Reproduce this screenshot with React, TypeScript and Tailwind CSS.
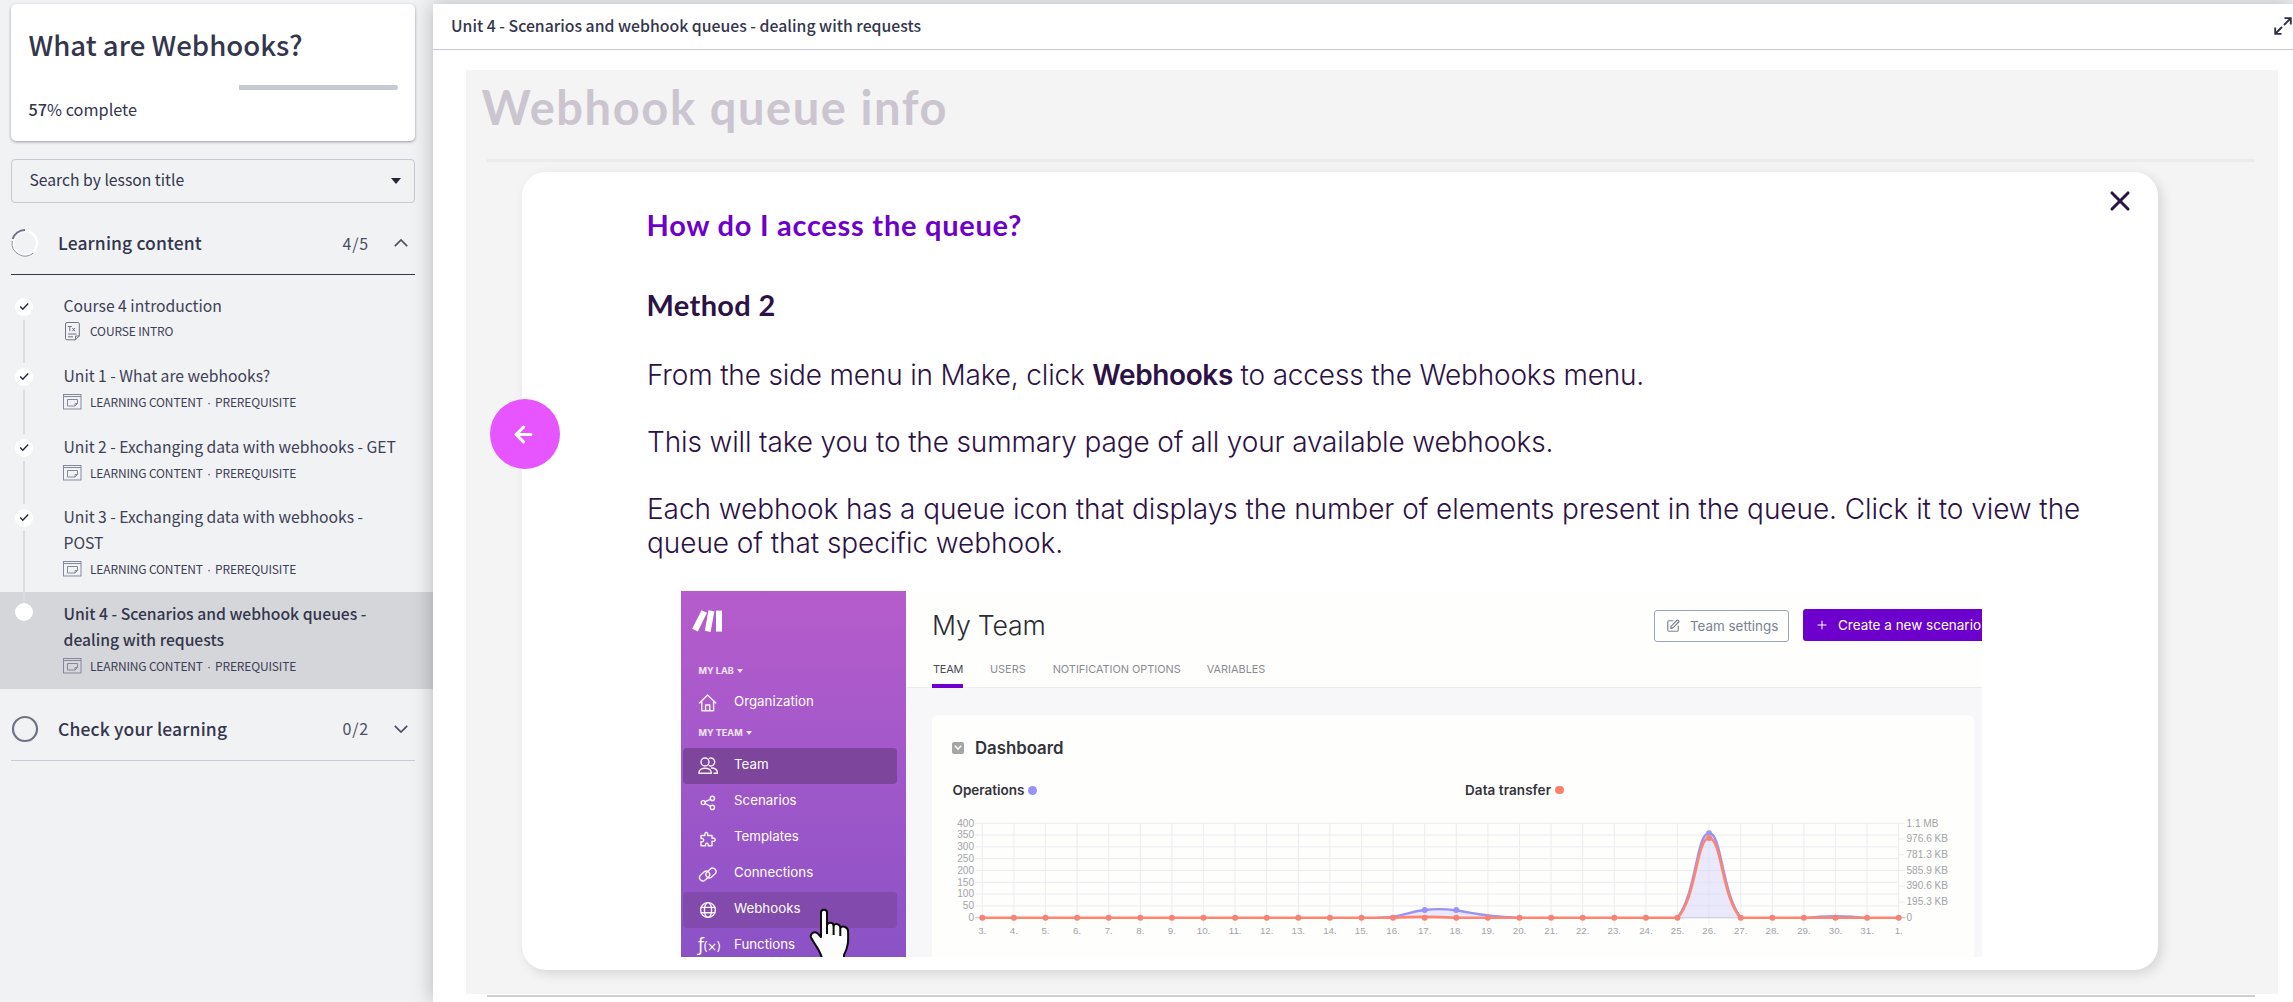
import type { ReactNode } from "react";
import { SquarePen, Plus, X, ArrowLeft } from "lucide-react";

const days = ["3.", "4.", "5.", "6.", "7.", "8.", "9.", "10.", "11.", "12.", "13.", "14.", "15.", "16.", "17.", "18.", "19.", "20.", "21.", "22.", "23.", "24.", "25.", "26.", "27.", "28.", "29.", "30.", "31.", "1."];
const opsTicks = ["400", "350", "300", "250", "200", "150", "100", "50", "0"];
const dataTicks = ["1.1 MB", "976.6 KB", "781.3 KB", "585.9 KB", "390.6 KB", "195.3 KB", "0"];

function CheckMark() {
  return (
    <svg viewBox="0 0 18 18" className="size-[18px]">
      <circle cx="9" cy="9" r="9" fill="#fff" />
      <path d="M5.2 8.6 L7.8 11.2 L13.2 5.6" fill="none" stroke="#23263b" strokeWidth="1.4" />
    </svg>
  );
}

function LessonIcon() {
  return (
    <svg viewBox="0 0 19 16" className="h-4 w-[19px]" fill="none" stroke="#85889a" strokeWidth="1">
      <rect x="0.5" y="0.5" width="17.5" height="14.5" />
      <path d="M0.5 2.5 H18" />
      <path d="M4.5 5.5 H14.5 V9.5 L12 12 H4.5 Z M14.5 9.5 H12 V12" />
    </svg>
  );
}

function IntroIcon() {
  return (
    <svg viewBox="0 0 15 19" className="ml-0.5 h-[19px] w-[15px]" fill="none" stroke="#6f7285" strokeWidth="1">
      <path d="M0.5 2 Q0.5 0.5 2 0.5 H12.8 Q14.3 0.5 14.3 2 V14 L10.5 17.8 H2 Q0.5 17.8 0.5 16.3 Z M14.3 14 H10.5 V17.8" />
      <path d="M2.8 4.5 H6.8 M4.8 4.5 V9.2 M7.4 6 L10 9.2 M10 6 L7.4 9.2 M3 12 H11.5 M3 14.8 H8" />
    </svg>
  );
}

function Lesson({ title, intro, current, h }: { title: ReactNode; intro?: boolean; current?: boolean; h: string }) {
  return (
    <div className={`relative flex ${h} ${current ? "bg-[#d5d6da]" : ""}`}>
      <div className="flex w-[63.5px] shrink-0 flex-col items-center pr-4 pt-[14px]">
        {current ? <span className="-mt-[3px] size-[18px] rounded-full bg-white" /> : <CheckMark />}
      </div>
      {!current && <span className="absolute left-[23px] top-[36px] -bottom-[9px] z-10 w-[2px] bg-[#dadce1]" />}
      <div className="pt-[9px] text-[#3d4057]">
        <div className={`text-[15.7px] leading-[26px] ${current ? "font-medium text-[#33364d]" : ""}`}>{title}</div>
        <div className="flex h-6 items-center">
          <span className={`-ml-px flex w-[27.5px] ${intro ? "" : "pt-px"}`}>{intro ? <IntroIcon /> : <LessonIcon />}</span>
          <span className={`text-[12px] leading-6 tracking-[-0.15px] ${intro ? "" : "pt-[2px]"}`}>
            {intro ? "COURSE INTRO" : <>LEARNING CONTENT <span className="mx-[1.6px] font-['Liberation_Sans',sans-serif]">·</span> PREREQUISITE</>}
          </span>
        </div>
      </div>
    </div>
  );
}

function Chevron({ up }: { up?: boolean }) {
  return (
    <svg viewBox="0 0 14 8" className="ml-[25px] mr-[7px] h-2 w-[14px]" fill="none" stroke="#4b4e63" strokeWidth="1.7">
      <path d={up ? "M0.8 7.2 L7 1 L13.2 7.2" : "M0.8 0.8 L7 7 L13.2 0.8"} />
    </svg>
  );
}

function Sidebar() {
  return (
    <aside className="w-[433px] shrink-0 overflow-hidden bg-[#f1f2f4] pt-1 font-['Noto_Sans_CJK_SC',sans-serif] text-[#33364d]">
      <div className="ml-[11px] h-[137px] w-[404px] rounded-[5px] bg-white pl-[17.5px] pr-[17px] pt-[18px] shadow-[0_1px_3px_rgba(60,64,80,0.5)]">
        <h1 className="text-[27.6px] font-medium leading-[44px]">What are Webhooks?</h1>
        <div className="mt-[19px] flex h-[5px] justify-end">
          <div className="h-[5px] w-[159px] rounded-r-full bg-[#c7cad4]" />
        </div>
        <p className="mt-[6px] text-[16.3px] leading-[26px]"><b className="font-medium">57</b>% complete</p>
      </div>
      <div className="ml-[11px] mt-[18px] flex h-[44px] w-[404px] items-center justify-between rounded-[4px] border border-[#c7cad4] pl-[17.5px] pr-[13px]">
        <span className="-mt-0.5 text-[15.7px] leading-6">Search by lesson title</span>
        <span className="h-0 w-0 border-x-[5px] border-t-[6px] border-x-transparent border-t-[#23263b]" />
      </div>
      <div className="ml-[11px] flex h-[72px] w-[404px] items-center border-b border-[#33364d] pt-[9px]">
        <svg viewBox="0 0 28 28" className="size-[28px]" fill="none">
          <circle cx="14" cy="14" r="12" stroke="#fff" strokeWidth="2.4" />
          <path d="M14 1 A13 13 0 0 0 1.6 10" stroke="#6f7285" strokeWidth="2" />
          <path d="M1.2 12 A13 13 0 0 0 22 24.3" stroke="#8d90a0" strokeWidth="1" />
        </svg>
        <h2 className="ml-[19px] flex-1 text-[17.5px] font-medium leading-7 tracking-[0.12px]">Learning content</h2>
        <span className="text-[16px] leading-6 tracking-[0.8px] text-[#4b4e63]">4/5</span>
        <Chevron up />
      </div>
      <div className="mt-[9px]">
        <Lesson h="h-[70px]" title="Course 4 introduction" intro />
        <Lesson h="h-[71px]" title="Unit 1 - What are webhooks?" />
        <Lesson h="h-[70px]" title="Unit 2 - Exchanging data with webhooks - GET" />
        <Lesson h="h-[97px]" title={<>Unit 3 - Exchanging data with webhooks -<br />POST</>} />
        <Lesson current h="h-[97px]" title={<>Unit 4 - Scenarios and webhook queues -<br />dealing with requests</>} />
      </div>
      <div className="ml-[11px] flex h-[72px] w-[404px] items-center border-b border-[#c7cad8] pt-[9px]">
        <svg viewBox="0 0 28 28" className="size-[28px]" fill="none">
          <circle cx="14" cy="14" r="12" stroke="#6f7285" strokeWidth="2.2" />
        </svg>
        <h2 className="ml-[19px] flex-1 text-[17.5px] font-medium leading-7 tracking-[0.15px]">Check your learning</h2>
        <span className="-mt-0.5 text-[16px] leading-6 tracking-[0.8px] text-[#4b4e63]">0/2</span>
        <Chevron />
      </div>
    </aside>
  );
}

function Chart() {
  const x0 = 50.3;
  const dx = 31.6;
  const y0 = 202.7;
  const top = 108.3;
  const px = (i: number) => x0 + i * dx;
  const peak = `M${px(22)} ${y0} C${px(22.6)} 178 ${px(22.6)} 118 ${px(23)} 118 C${px(23.4)} 118 ${px(23.4)} 178 ${px(24)} ${y0}`;
  const bump = `M${px(12.5)} ${y0} C${px(13.3)} 203 ${px(13.4)} 197 ${px(14)} 195 C${px(14.3)} 193.8 ${px(14.7)} 194 ${px(15)} 195.5 C${px(15.5)} 197.5 ${px(15.8)} 201.5 ${px(16.9)} ${y0}`;
  return (
    <svg viewBox="0 0 1042 242" className="absolute inset-0 h-[242px] w-[1042px] font-['Liberation_Sans',sans-serif]">
      <g stroke="#ececf1" strokeWidth="1">
        {opsTicks.map((t, i) => (
          <path key={t} d={`M${x0 - 7} ${top + i * 11.8} H${px(29)}`} />
        ))}
        {days.map((d, i) => (
          <path key={d} d={`M${px(i)} ${top} V${y0 + 7}`} />
        ))}
        {dataTicks.map((t, i) => (
          <path key={t} d={`M${px(29)} ${top + i * 15.73} h6`} />
        ))}
      </g>
      <path d={`M${x0 - 7} ${y0} H${px(29) + 7}`} stroke="#c9c9d0" strokeWidth="1.2" />
      <path d={`${peak} ${bump}`} fill="#dcd8fa" fillOpacity="0.6" />
      <path d={`${peak} ${bump}`} fill="none" stroke="#9a93f3" strokeWidth="2.4" />
      <path d={`M${px(26)} ${y0} Q${px(27)} 199 ${px(28)} ${y0}`} fill="none" stroke="#9a93f3" strokeWidth="1.6" />
      <path
        d={`M${x0} ${y0} H${px(13)} Q${px(14)} 201 ${px(15)} ${y0} H${px(22)} M${px(24)} ${y0} H${px(29)}`}
        fill="none"
        stroke="#ff8571"
        strokeWidth="2.6"
      />
      <path d={`M${px(22)} ${y0} C${px(22.6)} 183 ${px(22.6)} 123 ${px(23)} 123 C${px(23.4)} 123 ${px(23.4)} 183 ${px(24)} ${y0}`} fill="none" stroke="#ff8571" strokeWidth="2.6" />
      {[14, 15].map((i) => (
        <circle key={i} cx={px(i)} cy="195" r="2.9" fill="#9a93f3" />
      ))}
      <circle cx={px(23)} cy="118" r="2.8" fill="#9a93f3" />
      {days.map((d, i) => (
        <circle key={d} cx={px(i)} cy={i === 23 ? 123 : y0} r="3" fill="#f58478" />
      ))}
      <g fill="#a3a3a8" fontSize="10.1">
        {opsTicks.map((t, i) => (
          <text key={t} x="42" y={top + 3.2 + i * 11.8} textAnchor="end">{t}</text>
        ))}
        {days.map((d, i) => (
          <text key={d} x={px(i)} y="219.3" textAnchor="middle" fontSize="9.7">{d}</text>
        ))}
        {dataTicks.map((t, i) => (
          <text key={t} x="974.5" y={top + 3.2 + i * 15.73}>{t}</text>
        ))}
      </g>
    </svg>
  );
}

function MenuIcon({ children }: { children: ReactNode }) {
  return (
    <svg viewBox="0 0 20 20" className="size-5" fill="none" stroke="#fff" strokeOpacity="0.92" strokeWidth="1.4" strokeLinejoin="round" strokeLinecap="round">
      {children}
    </svg>
  );
}

function MenuRow({ icon, label, bg }: { icon: ReactNode; label: string; bg?: string }) {
  return (
    <div className={`ml-[2px] flex h-9 w-[214px] shrink-0 items-center rounded-[4px] pl-[15px] text-white ${bg ?? ""}`}>
      <span className="flex w-[36px] items-center">{icon}</span>
      <span className="-mt-[5px] text-[13.3px] leading-5">{label}</span>
    </div>
  );
}

function MenuHeading({ label }: { label: string }) {
  return (
    <div className="ml-[17.5px] flex h-[14px] shrink-0 items-center text-[9.1px] font-bold text-white/85">
      {label}
      <span className="ml-[3.5px] h-0 w-0 border-x-[3px] border-t-[4px] border-x-transparent border-t-white/85" />
    </div>
  );
}

function MakeMenu() {
  return (
    <div className="flex w-[225px] shrink-0 flex-col bg-linear-to-b from-[#b65ccc] to-[#8b52c6]">
      <svg viewBox="0 0 31 22" className="mb-[32px] ml-[11px] mt-[19px] h-[22px] w-[31px] shrink-0" fill="#fff">
        <path d="M9.5 0.3 L15 2.8 L5.8 21.6 L0.2 18.8 Z" />
        <path d="M16.5 0.3 L22.4 1.2 L18.6 22 L12.8 20.8 Z" />
        <path d="M24 0.6 H30 V21.6 H24 Z" />
      </svg>
      <MenuHeading label="MY LAB" />
      <div className="mb-[5px] mt-[7px]">
        <MenuRow label="Organization" icon={<MenuIcon><path d="M1.5 10 L9.6 2 L17.8 10 M3.8 8 V17.8 H15.6 V8 M7.6 17.8 V12 H11.8 V17.8" /></MenuIcon>} />
      </div>
      <MenuHeading label="MY TEAM" />
      <div className="mt-[8px]">
        <MenuRow label="Team" bg="bg-[#7d459c]" icon={<MenuIcon><circle cx="7" cy="6" r="4" /><path d="M11.2 2.3 A4 4 0 1 1 11.2 9.7 M0.8 17.2 C0.8 10.5 13.4 10.5 13.4 17.2 Z M13.5 12 C17 12 19.4 14 19.4 17.2 H16" /></MenuIcon>} />
        <MenuRow label="Scenarios" icon={<MenuIcon><circle cx="5.2" cy="10.6" r="2" /><circle cx="14.4" cy="6.4" r="2.1" /><circle cx="14.4" cy="15.4" r="2.1" /><path d="M7.2 9.7 L12.4 7.3 M7.2 11.5 L12.4 14.4" /></MenuIcon>} />
        <MenuRow label="Templates" icon={<MenuIcon><path d="M3 7.5 H7 C5.8 3.5 10.8 3.5 9.6 7.5 H14 V10.3 C18.2 8.9 18.2 14.5 14 13.2 V17.8 H10.2 C11 14.2 6.8 14.2 7.6 17.8 H3 V13.6 C6.6 14.6 6.6 9.6 3 10.6 Z" /></MenuIcon>} />
        <MenuRow label="Connections" icon={<MenuIcon><rect x="-5.6" y="-3.4" width="11.2" height="6.8" rx="3.4" transform="translate(6.6 12) rotate(-42)" /><rect x="-5.6" y="-3.4" width="11.2" height="6.8" rx="3.4" transform="translate(13 9) rotate(-42)" /></MenuIcon>} />
        <MenuRow label="Webhooks" bg="bg-[#814aac]" icon={<MenuIcon><circle cx="10" cy="10" r="7.4" /><ellipse cx="10" cy="10" rx="3.6" ry="7.4" /><path d="M3.2 7.4 H16.8 M3.2 12.8 H16.8" /></MenuIcon>} />
        <MenuRow label="Functions" icon={<span className="whitespace-nowrap font-['DejaVu_Sans',sans-serif] text-[12px] leading-4 tracking-[-0.8px]"><span className="text-[17px]">ƒ</span>(×)</span>} />
      </div>
    </div>
  );
}

function MakeScreen() {
  return (
    <div className="relative flex h-[366px] w-[1301px] overflow-hidden bg-[#fefefd] font-['Inter',sans-serif]">
      <MakeMenu />
      <div className="w-[1076px] bg-[#f7f7f9]">
        <div className="h-[97px] border-b border-[#ececef] bg-[#fefefd] pl-[27px]">
          <div className="flex h-[60px] items-start">
            <div className="-ml-px flex-1 pt-[15.5px] text-[26.7px] font-light leading-[36px] tracking-[-0.2px] text-[#2c2c33]">My Team</div>
            <div className="mt-[19px] flex h-[32px] w-[135px] items-center rounded-[3px] border border-[#9ba5b3] pl-[11px] text-[#7a8491]">
              <SquarePen size={14} strokeWidth={2} />
              <span className="ml-[10px] text-[13.4px]">Team settings</span>
            </div>
            <div className="ml-[14px] mt-[18px] flex h-[32px] w-[179px] items-center overflow-hidden whitespace-nowrap rounded-l-[3px] bg-[#6d00cc] pl-[12px] text-white">
              <Plus size={14} strokeWidth={1.8} />
              <span className="ml-[9px] text-[13.5px]">Create a new scenario</span>
            </div>
          </div>
          <div className="-mt-px flex h-[38px] text-[10.9px] leading-[38px] text-[#8c8c92]">
            <div className="-ml-px w-[31px] border-b-[4px] border-[#6d00cc] pl-px tracking-[-0.2px] text-[#4a4a52]">TEAM</div>
            <span className="ml-[27px]">USERS</span>
            <span className="ml-[27px]">NOTIFICATION OPTIONS</span>
            <span className="ml-[26px]">VARIABLES</span>
          </div>
        </div>
        <div className="relative ml-[26px] mt-[27px] h-[242px] w-[1042px] rounded-t-[6px] bg-[#fefefd] text-[#33333a]">
          <div className="flex items-center pl-5 pt-[22.5px]">
            <span className="flex size-3 items-center justify-center rounded-[2px] bg-[#a5a5a5]">
              <svg viewBox="0 0 8 5" className="h-[5px] w-2" fill="none" stroke="#fff" strokeWidth="1.6"><path d="M0.8 0.8 L4 4 L7.2 0.8" /></svg>
            </span>
            <span className="ml-[11px] text-[16.8px] font-semibold leading-5">Dashboard</span>
          </div>
          <div className="mt-[22.5px] flex items-center pl-[20.5px] text-[13.5px] font-semibold leading-5">
            <div className="flex w-[512.5px] items-center">Operations<span className="ml-[4px] size-[9px] rounded-full bg-[#9a90f5]" /></div>
            <div className="flex items-center tracking-[0.07px]">Data transfer<span className="ml-[4px] size-[8.5px] rounded-full bg-[#ff806a]" /></div>
          </div>
          <Chart />
        </div>
      </div>
      <svg viewBox="0 0 42 56" className="absolute left-[128px] top-[317px] h-[56px] w-[42px]">
        <path d="M13 50 C10.5 41 5.5 36.5 2 29.5 C0.6 26 5 22.6 8.6 25.4 L12 29 V4.5 C12 0.9 18 0.9 18 4.5 V17.5 C18.4 13.6 24.4 13.9 24.6 17.8 C25.4 14.9 31 15.6 31.4 19.6 C33 17.4 38.4 18.6 39 22.6 C39.4 33 39.6 38 35 47 V54 H13 Z" fill="#fdfdfd" stroke="#0a0a0a" strokeWidth="2" strokeLinejoin="round" />
        <path d="M18 17 V26 M24.6 17.5 V27 M31.3 19.5 V28" stroke="#0a0a0a" strokeWidth="2" fill="none" />
      </svg>
    </div>
  );
}

export default function App() {
  return (
    <div className="flex h-[1002px] w-[2293px] overflow-hidden bg-[#f1f2f4]">
      <Sidebar />
      <main className="relative mt-1 w-[1860px] bg-white shadow-[0_0_20px_rgba(0,0,0,0.25)]">
        <header className="flex h-[46px] items-center justify-between border-b border-[#c7cad4] pl-[18px] font-['Noto_Sans_CJK_SC',sans-serif] text-[#33364d]">
          <span className="-mt-px text-[15.8px] font-medium leading-6">Unit 4 - Scenarios and webhook queues - dealing with requests</span>
          <svg viewBox="0 0 18 18" className="-mt-px mr-px size-[18px]" fill="none" stroke="#2b2e45" strokeWidth="1.8">
            <path d="M10 8 L16 2 M8 10 L2 16" />
            <path d="M10.5 1.2 H16.8 V7.5 M1.2 10.5 V16.8 H7.5" />
          </svg>
        </header>
        <section className="ml-[33px] mt-[20px] h-[924px] w-[1812px] bg-[#f4f4f4] text-[#2d1245]">
          <h2 className="h-[89px] pl-[15.5px] pt-[9px] font-['Lato',sans-serif] text-[47px] font-bold leading-[56px] tracking-[1.6px] text-[#cbc5cf]">Webhook queue info</h2>
          <div className="ml-[21px] h-[3px] w-[1768px] bg-[#ebebeb]" />
          <article className="relative ml-[56px] mt-[10px] h-[798px] w-[1636px] rounded-[24px] bg-white pl-[125.5px] pt-[38px] shadow-[4px_4px_12px_rgba(0,0,0,0.12)]">
            <X size={32} strokeWidth={2.3} className="absolute right-[22.5px] top-[13px]" />
            <span className="absolute -left-8 top-[227px] flex size-[70px] items-center justify-center rounded-full bg-[#e655ff] text-white">
              <ArrowLeft size={25} strokeWidth={3} className="-ml-1" />
            </span>
            <h3 className="-ml-px h-[80px] font-['Lato',sans-serif] text-[29px] font-bold leading-[30px] tracking-[0.74px] text-[#6e00cc]">How do I access the queue?</h3>
            <h3 className="-ml-px h-[69px] font-['Lato',sans-serif] text-[29px] font-bold leading-[30px] tracking-[0.35px]">Method 2</h3>
            <div className="-ml-[0.5px] font-['Inter',sans-serif] text-[28px] font-light leading-[33.6px]">
              <p className="h-[67px] tracking-[-0.17px]">From the side menu in Make, click <b className="font-semibold tracking-[-0.4px]">Webhooks</b> to access the Webhooks menu.</p>
              <p className="h-[67px] tracking-[-0.14px]">This will take you to the summary page of all your available webhooks.</p>
              <p className="h-[67px] tracking-[-0.06px]">Each webhook has a queue icon that displays the number of elements present in the queue. Click it to view the<br />queue of that specific webhook.</p>
            </div>
            <div className="ml-[33.5px] mt-[31px]"><MakeScreen /></div>
          </article>
          <div className="ml-[21px] mt-[25px] h-[2px] w-[1768px] bg-[#d3cdd4]" />
        </section>
      </main>
    </div>
  );
}
